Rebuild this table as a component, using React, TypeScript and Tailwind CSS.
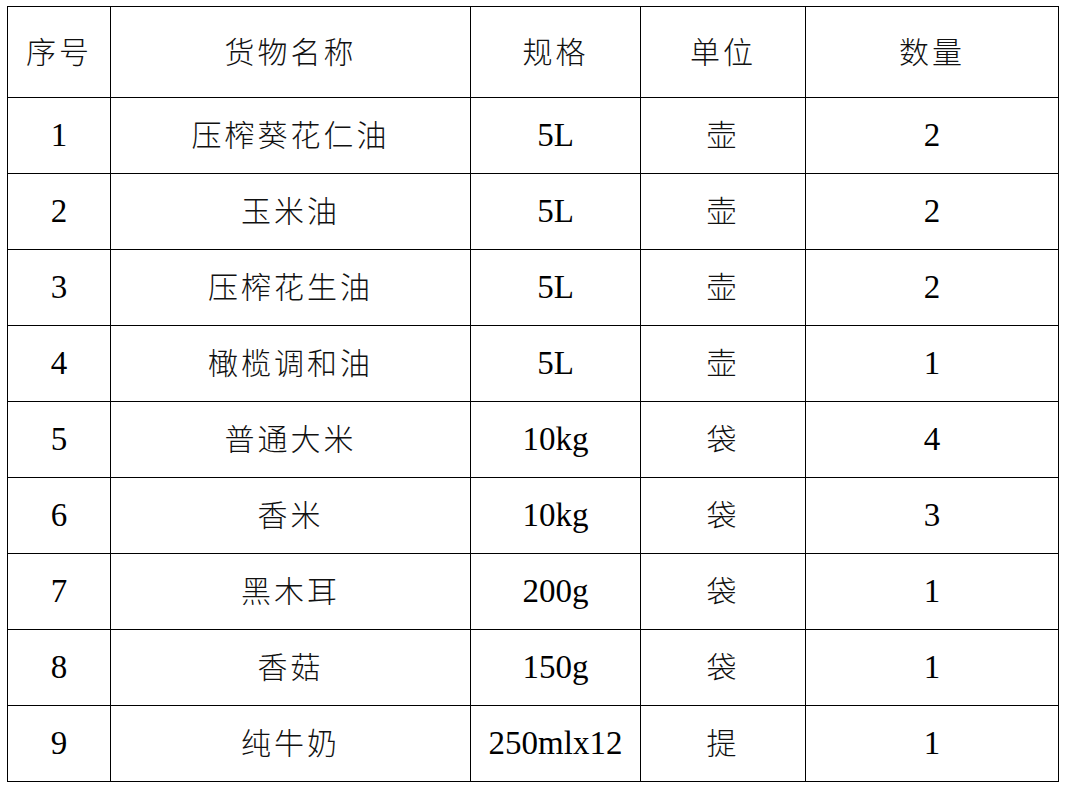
import React from "react";

const header = ["序号", "货物名称", "规格", "单位", "数量"];

const rows: string[][] = [
  ["1", "压榨葵花仁油", "5L", "壶", "2"],
  ["2", "玉米油", "5L", "壶", "2"],
  ["3", "压榨花生油", "5L", "壶", "2"],
  ["4", "橄榄调和油", "5L", "壶", "1"],
  ["5", "普通大米", "10kg", "袋", "4"],
  ["6", "香米", "10kg", "袋", "3"],
  ["7", "黑木耳", "200g", "袋", "1"],
  ["8", "香菇", "150g", "袋", "1"],
  ["9", "纯牛奶", "250mlx12", "提", "1"],
];

const widths = ["w-[103px]", "w-[360px]", "w-[170px]", "w-[165px]", "w-[253px]"];

function isCjk(s: string) {
  return /[\u4e00-\u9fff]/.test(s);
}

function Cell({ text, head }: { text: string; head?: boolean }) {
  const cls = isCjk(text)
    ? "text-[30px] tracking-[3px] pb-[4px] font-['Noto_Sans_CJK_SC',sans-serif] font-extralight text-[#111]"
    : "text-[33px] font-['Liberation_Serif',serif] font-normal text-black";
  const Tag = head ? "th" : "td";
  return (
    <Tag className={`border border-black text-center align-middle px-0 pt-0 ${cls}`}>
      {text}
    </Tag>
  );
}

export default function App() {
  return (
    <div className="w-[1068px] h-[790px] bg-white pt-[6px] pl-[7px]">
      <table className="border-collapse table-fixed w-[1051px]">
        <colgroup>
          {widths.map((w, i) => (
            <col key={i} className={w} />
          ))}
        </colgroup>
        <thead>
          <tr className="h-[91px]">
            {header.map((h) => (
              <Cell key={h} text={h} head />
            ))}
          </tr>
        </thead>
        <tbody>
          {rows.map((r) => (
            <tr key={r[0]} className="h-[76px]">
              {r.map((c, i) => (
                <Cell key={i} text={c} />
              ))}
            </tr>
          ))}
        </tbody>
      </table>
    </div>
  );
}
